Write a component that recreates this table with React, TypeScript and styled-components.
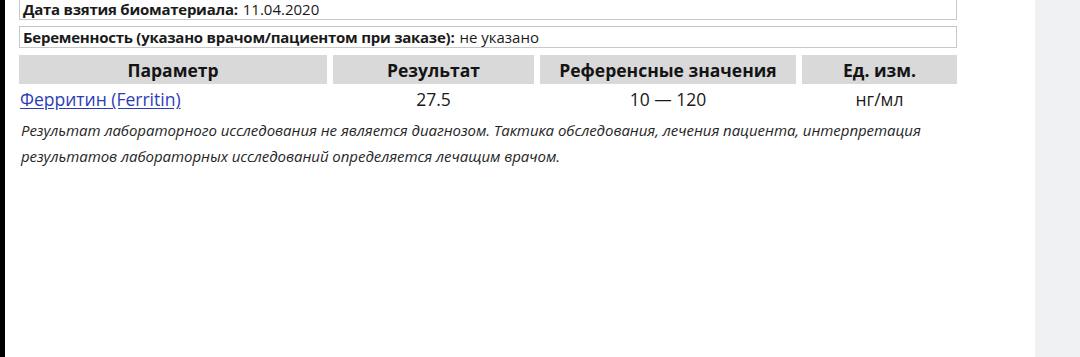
import React from 'react';
import styled, { createGlobalStyle } from 'styled-components';

const GlobalStyle = createGlobalStyle`
	html, body {
		margin: 0;
		padding: 0;
		background: #ffffff;
	}
	body {
		font-family: 'Open Sans', 'Noto Sans', sans-serif;
		color: #1a1a1a;
	}
`;

const Screen = styled.div`
	display: flex;
	width: 1080px;
	height: 357px;
	overflow: hidden;
`;

const Edge = styled.div`
	width: 5px;
	background: #000000;
`;

const Sheet = styled.main`
	flex: 1;
	background: #ffffff;
	padding-left: 14px;
`;

const SidePanel = styled.aside`
	width: 45px;
	background: #f0f1f3;
`;

const Content = styled.div`
	width: 938px;
	margin-top: -2px;
`;

interface InfoBoxProps {
    gap?: number;
}
const InfoBox = styled.div<InfoBoxProps>`
	box-sizing: border-box;
	height: 22px;
	margin-top: ${(props) => props.gap || 0}px;
	border: 1px solid #c8c8c8;
	padding: 0 3px;
	display: flex;
	align-items: center;
	font-size: 15px;
	white-space: nowrap;
`;

const Label = styled.b`
	font-weight: 700;
	letter-spacing: -0.25px;
	margin-right: 5px;
`;

const ResultTable = styled.table`
	width: calc(100% + 12px);
	margin: 1px -6px 0;
	border-collapse: separate;
	border-spacing: 6px 6px;
	table-layout: fixed;
`;

interface CellProps {
    align?: 'left' | 'center';
}
const HeadCell = styled.th`
	height: 29px;
	padding: 0;
	background: #d9d9d9;
	font-size: 17.5px;
	font-weight: 700;
	color: #141414;
	text-align: center;
`;

const Cell = styled.td<CellProps>`
	padding: 0 1px;
	height: 18px;
	font-size: 17.5px;
	line-height: 18px;
	text-align: ${(props) => props.align || 'center'};
	vertical-align: middle;
`;

const Link = styled.a`
	color: #2b3cb8;
	text-decoration: underline;
	text-underline-offset: 2px;
`;

const Note = styled.p`
	margin: 3px 0 0 2px;
	font-size: 15px;
	font-style: italic;
	line-height: 26px;
	letter-spacing: -0.05px;
	color: #262626;
`;

export default function App() {
    return (
        <>
            <GlobalStyle />
            <Screen>
                <Edge />
                <Sheet>
                    <Content>
                        <InfoBox>
                            <Label>Дата взятия биоматериала:</Label>11.04.2020
                        </InfoBox>
                        <InfoBox gap={6}>
                            <Label>Беременность (указано врачом/пациентом при заказе):</Label>не указано
                        </InfoBox>
                        <ResultTable>
                            <colgroup>
                                <col style={{ width: 308 }} />
                                <col style={{ width: 201 }} />
                                <col style={{ width: 256 }} />
                                <col />
                            </colgroup>
                            <thead>
                                <tr>
                                    <HeadCell>Параметр</HeadCell>
                                    <HeadCell>Результат</HeadCell>
                                    <HeadCell>Референсные значения</HeadCell>
                                    <HeadCell>Ед. изм.</HeadCell>
                                </tr>
                            </thead>
                            <tbody>
                                <tr>
                                    <Cell align="left">
                                        <Link href="#">Ферритин (Ferritin)</Link>
                                    </Cell>
                                    <Cell>27.5</Cell>
                                    <Cell>10 — 120</Cell>
                                    <Cell>нг/мл</Cell>
                                </tr>
                            </tbody>
                        </ResultTable>
                        <Note>
                            Результат лабораторного исследования не является диагнозом. Тактика обследования, лечения пациента, интерпретация
                            <br />
                            результатов лабораторных исследований определяется лечащим врачом.
                        </Note>
                    </Content>
                </Sheet>
                <SidePanel />
            </Screen>
        </>
    );
}
